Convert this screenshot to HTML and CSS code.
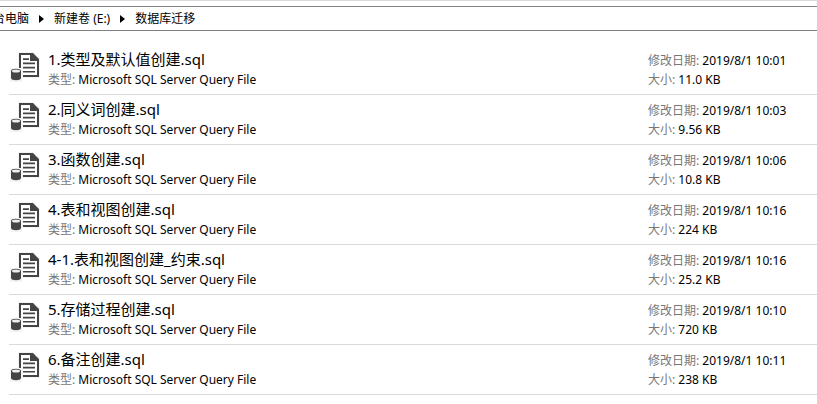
FILE: index.html
```html
<!DOCTYPE html>
<html lang="zh-CN">
<head>
    <meta charset="UTF-8">
    <meta name="viewport" content="width=device-width, initial-scale=1.0">
    <title>数据库迁移</title>
    <link rel="stylesheet" href="styles.css">
</head>
<body>
    <!-- File icon, reused by every row -->
    <svg class="sprite" width="0" height="0" aria-hidden="true">
        <symbol id="sql-file" viewBox="0 0 30 30">
            <path fill="#f4f4f4" d="M8 0H24L30 6V26H12V30H0V16H8Z"/>
            <path fill="#fff" d="M11 3H27V23H13V16H11Z"/>
            <path fill="#444" d="M9 1H23L29 7V25H13V23H27V9H20V3H11V16H9Z"/>
            <path fill="#444" d="M13 6.300h6v1.600h-6zM13 10.600h12v1.600h-12zM13 14.800h12v1.600h-12zM13 19h12v1.600h-12z"/>
            <path fill="#444" d="M1 19C1 16 11 16 11 19V26C11 29 1 29 1 26Z"/>
            <ellipse fill="#eee" cx="6" cy="19" rx="4" ry="1.500"/>
        </symbol>
    </svg>

    <nav class="address">
        <a class="crumb crumb-cut" href="#">台电脑</a>
        <svg class="arrow" viewBox="0 0 5 8" aria-hidden="true"><path d="M0 0L5 4L0 8Z"/></svg>
        <a class="crumb" href="#">新建卷 (E:)</a>
        <svg class="arrow" viewBox="0 0 5 8" aria-hidden="true"><path d="M0 0L5 4L0 8Z"/></svg>
        <a class="crumb" href="#">数据库迁移</a>
    </nav>

    <ul class="files">
        <li class="file">
            <svg class="icon" aria-hidden="true"><use href="#sql-file"/></svg>
            <div class="main">
                <a class="name" href="#">1.类型及默认值创建.sql</a>
                <div class="info"><span class="label">类型:</span> Microsoft SQL Server Query File</div>
            </div>
            <div class="details">
                <div class="info"><span class="label">修改日期:</span> 2019/8/1 10:01</div>
                <div class="info"><span class="label">大小:</span> 11.0 KB</div>
            </div>
        </li>
        <li class="file">
            <svg class="icon" aria-hidden="true"><use href="#sql-file"/></svg>
            <div class="main">
                <a class="name" href="#">2.同义词创建.sql</a>
                <div class="info"><span class="label">类型:</span> Microsoft SQL Server Query File</div>
            </div>
            <div class="details">
                <div class="info"><span class="label">修改日期:</span> 2019/8/1 10:03</div>
                <div class="info"><span class="label">大小:</span> 9.56 KB</div>
            </div>
        </li>
        <li class="file">
            <svg class="icon" aria-hidden="true"><use href="#sql-file"/></svg>
            <div class="main">
                <a class="name" href="#">3.函数创建.sql</a>
                <div class="info"><span class="label">类型:</span> Microsoft SQL Server Query File</div>
            </div>
            <div class="details">
                <div class="info"><span class="label">修改日期:</span> 2019/8/1 10:06</div>
                <div class="info"><span class="label">大小:</span> 10.8 KB</div>
            </div>
        </li>
        <li class="file">
            <svg class="icon" aria-hidden="true"><use href="#sql-file"/></svg>
            <div class="main">
                <a class="name" href="#">4.表和视图创建.sql</a>
                <div class="info"><span class="label">类型:</span> Microsoft SQL Server Query File</div>
            </div>
            <div class="details">
                <div class="info"><span class="label">修改日期:</span> 2019/8/1 10:16</div>
                <div class="info"><span class="label">大小:</span> 224 KB</div>
            </div>
        </li>
        <li class="file">
            <svg class="icon" aria-hidden="true"><use href="#sql-file"/></svg>
            <div class="main">
                <a class="name" href="#">4-1.表和视图创建_约束.sql</a>
                <div class="info"><span class="label">类型:</span> Microsoft SQL Server Query File</div>
            </div>
            <div class="details">
                <div class="info"><span class="label">修改日期:</span> 2019/8/1 10:16</div>
                <div class="info"><span class="label">大小:</span> 25.2 KB</div>
            </div>
        </li>
        <li class="file">
            <svg class="icon" aria-hidden="true"><use href="#sql-file"/></svg>
            <div class="main">
                <a class="name" href="#">5.存储过程创建.sql</a>
                <div class="info"><span class="label">类型:</span> Microsoft SQL Server Query File</div>
            </div>
            <div class="details">
                <div class="info"><span class="label">修改日期:</span> 2019/8/1 10:10</div>
                <div class="info"><span class="label">大小:</span> 720 KB</div>
            </div>
        </li>
        <li class="file">
            <svg class="icon" aria-hidden="true"><use href="#sql-file"/></svg>
            <div class="main">
                <a class="name" href="#">6.备注创建.sql</a>
                <div class="info"><span class="label">类型:</span> Microsoft SQL Server Query File</div>
            </div>
            <div class="details">
                <div class="info"><span class="label">修改日期:</span> 2019/8/1 10:11</div>
                <div class="info"><span class="label">大小:</span> 238 KB</div>
            </div>
        </li>
    </ul>
</body>
</html>
```
FILE: styles.css
```css
body {
    margin: 0;
    border-top: 1px solid #dadada;
    background-color: white;
    color: #000;
    font-family: "Noto Sans", "Noto Sans CJK SC", sans-serif;
    font-size: 12px;
}

a {
    color: inherit;
    text-decoration: none;
}

.sprite {
    position: absolute;
}

/* Address bar */
.address {
    display: flex;
    align-items: center;
    gap: 10px;
    height: 23px;
    margin-top: 5px;
    border-top: 1px solid #808080;
    border-bottom: 1px solid #808080;
    overflow: hidden;
    white-space: nowrap;
}

.crumb {
    padding-bottom: 2px;
}

.crumb-cut {
    margin-left: -7px;
}

.arrow {
    width: 5px;
    height: 8px;
}

/* File list */
.files {
    list-style: none;
    margin: 14px 0 0;
    padding: 0 0 0 9px;
}

.file {
    display: flex;
    align-items: flex-start;
    box-sizing: border-box;
    height: 50px;
    padding-top: 5px;
    border-bottom: 1px solid #dadada;
    white-space: nowrap;
}

.icon {
    width: 30px;
    height: 30px;
    margin: 2px 8px 0 1px;
}

.main {
    flex: 1;
}

.name {
    display: block;
    margin-bottom: 2px;
    font-size: 15px;
    line-height: 18px;
}

.info {
    line-height: 19px;
}

.label {
    color: #777;
}

.details {
    width: 169px;
    margin-top: 1px;
}
```
